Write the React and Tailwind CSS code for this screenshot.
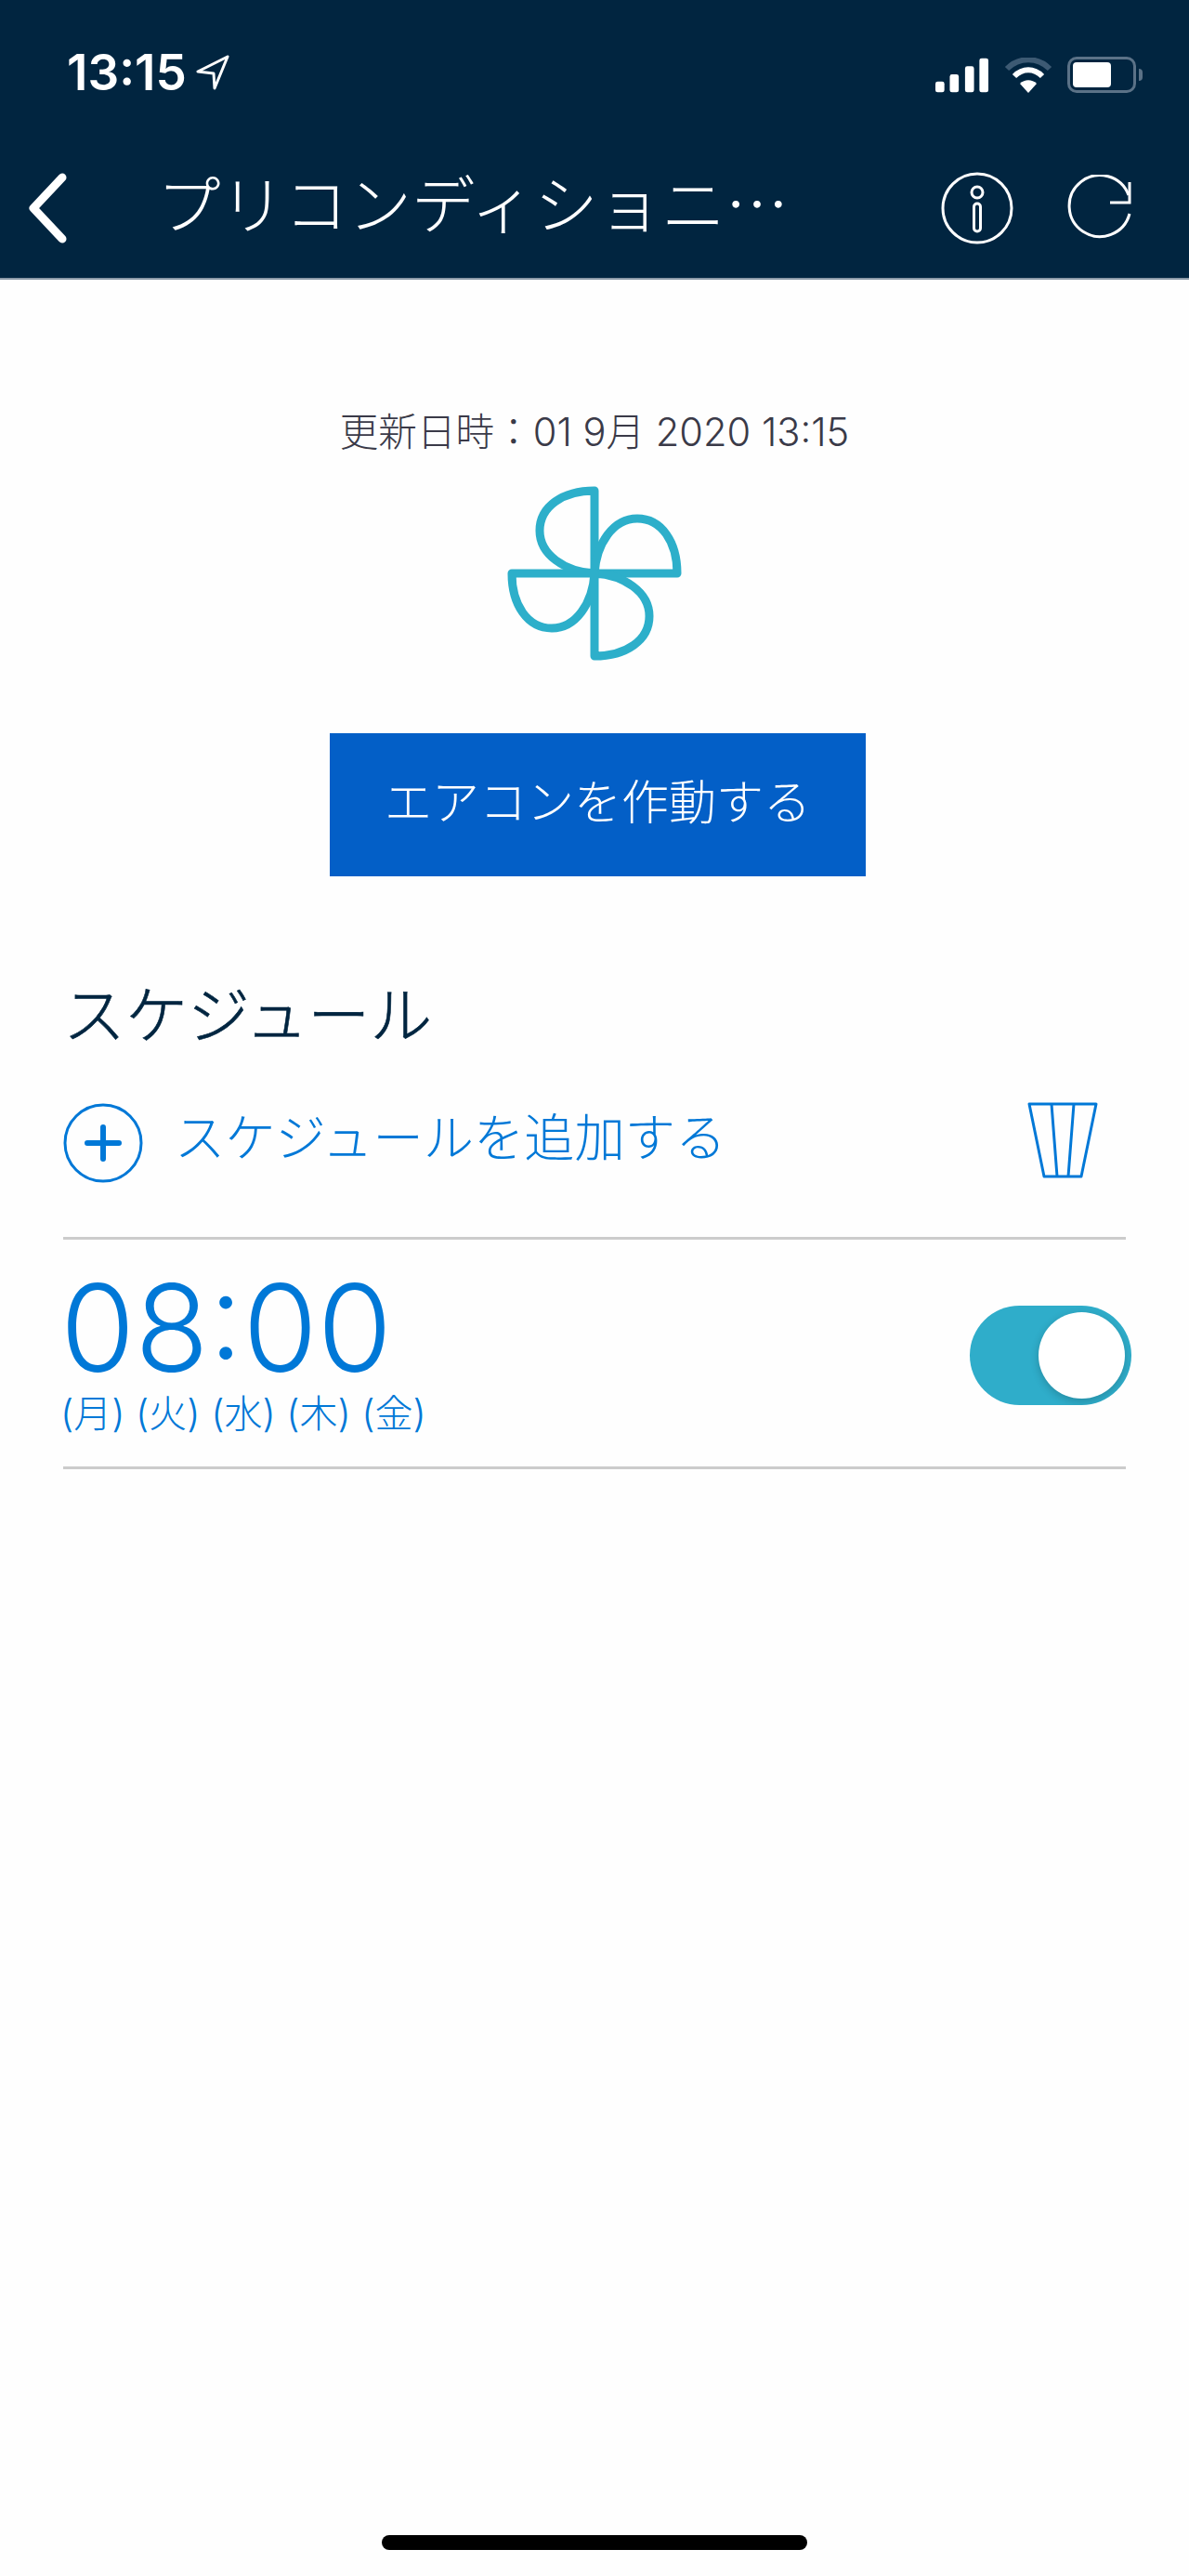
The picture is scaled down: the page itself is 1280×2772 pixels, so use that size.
import React from 'react';

const FONT = 'font-[Inter,"Noto_Sans_CJK_JP",sans-serif]';

const Chevron = () => (
  <svg width="44" height="76" viewBox="0 0 44 76" fill="none" stroke="#fff" strokeWidth="9" strokeLinecap="round" strokeLinejoin="round">
    <path d="M37 5 L6 38 L37 71" />
  </svg>
);

const Signal = () => (
  <svg width="58" height="38" viewBox="0 0 60 38" fill="#fff">
    <rect x="0" y="26" width="10" height="12" rx="2.5" />
    <rect x="16" y="18" width="10" height="20" rx="2.5" />
    <rect x="33" y="9" width="10" height="29" rx="2.5" />
    <rect x="49" y="0" width="10" height="38" rx="2.5" />
  </svg>
);

const Wifi = () => (
  <svg width="52" height="38" viewBox="0 0 52 38" fill="none">
    <path d="M3 12 C16 -1 36 -1 49 12" stroke="#3d5a73" strokeWidth="6" />
    <path d="M11 20 C20 11 32 11 41 20" stroke="#fff" strokeWidth="6" />
    <path d="M26 38 L17 28 C22 23 30 23 35 28 Z" fill="#fff" />
  </svg>
);

const Battery = () => (
  <div className="flex items-center gap-[3px]">
    <div className="w-[74px] h-[39px] rounded-[10px] border-[3px] border-[#5b7287] p-[3px]">
      <div className="w-[41px] h-full rounded-[4px] bg-white" />
    </div>
    <div className="w-[4px] h-[13px] rounded-r-full bg-[#5b7287]" />
  </div>
);

const InfoIcon = () => (
  <svg width="78" height="78" viewBox="0 0 78 78" fill="none" stroke="#fff" strokeWidth="3">
    <circle cx="39" cy="39" r="37" />
    <circle cx="39" cy="22" r="6" />
    <rect x="35.5" y="34" width="7" height="30" rx="3.5" />
  </svg>
);

const RefreshIcon = () => (
  <svg width="72" height="72" viewBox="0 0 72 72" fill="none" stroke="#fff" strokeWidth="3">
    <path d="M67 42 A33 33 0 1 1 66 22" />
    <path d="M67 8 V30 H46" />
  </svg>
);

const Fan = () => (
  <svg width="188" height="188" viewBox="0 0 188 188" fill="none" stroke="#2dafca" strokeWidth="9" strokeLinejoin="round">
    <path d="M94 5 V94 C62 92 35 74 35 48 C35 22 60 5 94 5 Z" />
    <path d="M183 94 H94 C96 62 114 35 140 35 C166 35 183 60 183 94 Z" />
    <path d="M94 183 V94 C126 96 153 114 153 140 C153 166 128 183 94 183 Z" />
    <path d="M5 94 H94 C92 126 74 153 48 153 C22 153 5 128 5 94 Z" />
  </svg>
);

const PlusCircle = () => (
  <svg width="86" height="86" viewBox="0 0 86 86" fill="none" stroke="#0078d7">
    <circle cx="43" cy="43" r="41" strokeWidth="3" />
    <path d="M43 26 V60 M26 43 H60" strokeWidth="6" strokeLinecap="round" />
  </svg>
);

const Trash = () => (
  <svg width="76" height="82" viewBox="0 0 76 82" fill="none" stroke="#0078d7" strokeWidth="3" strokeLinejoin="round">
    <path d="M2 2 H74 L58 80 H18 Z" />
    <path d="M26 2 L32 80 M50 2 L44 80" />
  </svg>
);

const Toggle = () => (
  <div className="w-[174px] h-[107px] rounded-full bg-[#2fadca] overflow-hidden flex items-center justify-end pr-[7px]">
    <div className="w-[93px] h-[93px] rounded-full bg-white shadow-[0_3px_10px_rgba(0,0,0,0.2)]" />
  </div>
);

export default function App() {
  return (
    <div className={`${FONT} w-[1280px] h-[2772px] bg-[#fefefe] flex flex-col`}>
      {/* Header */}
      <div className="h-[301px] bg-[#012540] border-b-2 border-[#8b9aa8] flex flex-col text-white">
        <div className="h-[160px] pl-[72px] pr-[50px] pt-[50px] flex justify-between items-start">
          <div className="flex items-center gap-[10px]">
            <span className="text-[53px] leading-[56px] font-semibold">13:15</span>
            <svg width="36" height="38" viewBox="0 0 36 38" fill="none" stroke="#fff" strokeWidth="3" strokeLinejoin="round">
              <path d="M34 2 L2 18 L19 20 L20 36 Z" />
            </svg>
          </div>
          <div className="flex items-center gap-[16px] pt-[11px]">
            <Signal />
            <Wifi />
            <Battery />
          </div>
        </div>
        <div className="flex-1 flex items-center pl-[30px] pr-[59px] pb-[12px]">
          <Chevron />
          <span className="ml-[104px] -translate-x-[9px] -translate-y-[4px] flex-1 text-[68.5px] leading-none font-light whitespace-nowrap">
            プリコンディショニ<span className="font-['Noto_Sans_CJK_JP']">…</span>
          </span>
          <div className="flex items-center gap-[58px]">
            <InfoIcon />
            <RefreshIcon />
          </div>
        </div>
      </div>

      {/* Status */}
      <div className="flex flex-col items-center pt-[140px]">
        <p className="text-[41.6px] leading-[48px] text-[#3a3a48] font-light">更新日時：01 9月 2020 13:15</p>
        <div className="mt-[34px]"><Fan /></div>
        <button className="mt-[78px] ml-[7px] w-[577px] h-[154px] pb-[4px] bg-[#035fc7] text-white text-[51px] font-light">エアコンを作動する</button>
      </div>

      {/* Schedule */}
      <div className="px-[68px] pt-[110px]">
        <h2 className="text-[67px] leading-[80px] text-[#012540] font-light [-webkit-text-stroke:0.6px_#012540]">スケジュール</h2>
        <div className="mt-[48px] h-[150px] flex items-start justify-between">
          <div className="flex items-center gap-[34px]">
            <div className="mt-[6px]"><PlusCircle /></div>
            <span className="pb-[6px] text-[54.3px] leading-[60px] text-[#0078d7] font-light">スケジュールを追加する</span>
          </div>
          <div className="mr-[30px] pt-[5px]"><Trash /></div>
        </div>
        <div className="border-t-[3px] border-b-[3px] border-[#cccccc] h-[250px] flex items-center justify-between">
          <div className="pb-[8px] -ml-[3px]">
            <div className="text-[130px] leading-[138px] font-[275] text-[#0078d7]">08:00</div>
            <div className="text-[41px] leading-[46px] text-[#0078d7] font-light">(月) (火) (水) (木) (金)</div>
          </div>
          <div className="-mr-[6px] mt-[5px]"><Toggle /></div>
        </div>
      </div>

      {/* Home indicator */}
      <div className="mt-auto mb-[28px] mx-auto w-[458px] h-[16px] rounded-full bg-black" />
    </div>
  );
}
